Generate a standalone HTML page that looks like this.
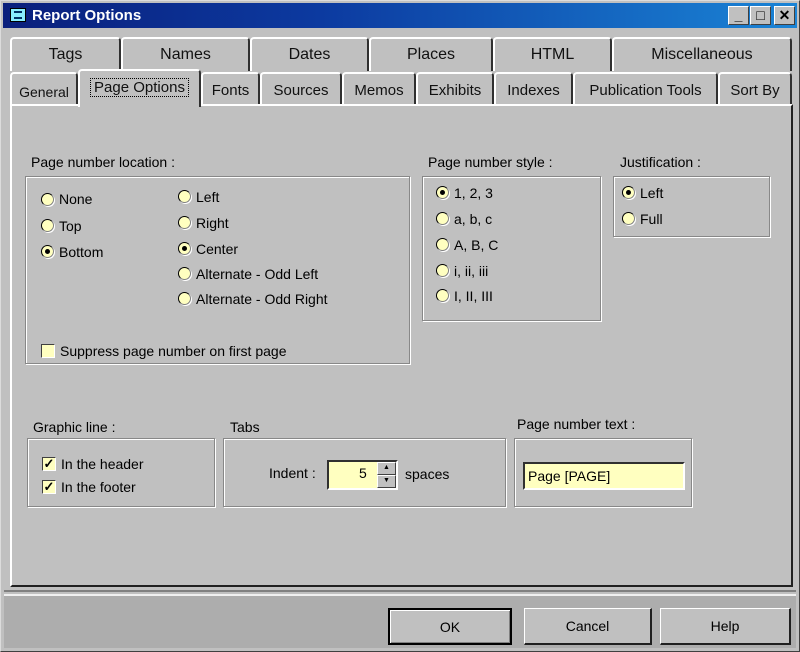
<!DOCTYPE html>
<html><head><meta charset="utf-8"><style>
*{margin:0;padding:0;box-sizing:border-box}
body{width:800px;height:652px;background:#c0c0c0;font-family:"Liberation Sans",sans-serif;font-size:14px;color:#000;position:relative;overflow:hidden}
.a{position:absolute}
.win{left:0;top:0;width:800px;height:652px;border:1px solid #dcdcdc;border-right-color:#404040;border-bottom-color:#404040;background:#c0c0c0}
.title{left:3px;top:3px;width:794px;height:25px;background:linear-gradient(90deg,#0a1f7c 0%,#0c3aa0 40%,#1a84d6 100%);color:#fff;font-weight:bold;font-size:15px;line-height:25px;padding-left:29px}
.tb{top:6px;width:21px;height:19px;background:#c0c0c0;border:1px solid #fff;border-right-color:#404040;border-bottom-color:#404040;font-size:14px;line-height:16px;text-align:center;color:#000;font-weight:bold}
.tab{background:#c0c0c0;border:2px solid #fff;border-right:2px solid #303030;border-bottom:none;border-radius:4px 4px 0 0;text-align:center;font-size:16px;line-height:32px;color:#111}
.tab2{font-size:15px;line-height:34px}
.panel{left:10px;top:104px;width:783px;height:483px;border:2px solid #fff;border-right-color:#202020;border-bottom-color:#202020;background:#c0c0c0}
.box{border:1px solid #888;box-shadow:inset 1px 1px 0 #fff,1px 1px 0 #fff}
.lbl{font-size:14px}
.r{width:13px;height:13px;border-radius:50%;background:#ffffc0;border:1px solid #808080;border-top-color:#000;border-left-color:#000;box-shadow:1px 1px 0 #fff}
.r.on::after{content:"";position:absolute;left:3px;top:3px;width:5px;height:5px;border-radius:50%;background:#000}
.cb{width:14px;height:14px;background:#ffffc0;border:1px solid #fff;border-top-color:#404040;border-left-color:#404040;font-size:13px;line-height:12px;text-align:center;font-weight:bold}
.btn{top:608px;height:37px;border:1px solid #fff;border-right:2px solid #202020;border-bottom:2px solid #202020;text-align:center;line-height:34px;font-size:14px;background:#c0c0c0}
</style></head><body>
<div class="a win"></div>
<div class="a title">Report Options</div>
<div class="a" style="left:10px;top:8px;width:16px;height:14px;background:#8ef;border:1px solid #000"><div style="margin:2px 3px;height:8px;border-top:2px solid #036;border-bottom:2px solid #036"></div></div>
<div class="a tb" style="left:728px">_</div>
<div class="a tb" style="left:750px">□</div>
<div class="a tb" style="left:774px">✕</div>

<div class="a tab" style="left:10px;top:37px;width:111px;height:34px">Tags</div>
<div class="a tab" style="left:121px;top:37px;width:129px;height:34px">Names</div>
<div class="a tab" style="left:250px;top:37px;width:119px;height:34px">Dates</div>
<div class="a tab" style="left:369px;top:37px;width:124px;height:34px">Places</div>
<div class="a tab" style="left:493px;top:37px;width:119px;height:34px">HTML</div>
<div class="a tab" style="left:612px;top:37px;width:180px;height:34px">Miscellaneous</div>

<div class="a tab tab2" style="left:10px;top:72px;width:68px;height:33px;font-size:14px;line-height:36px">General</div>
<div class="a tab tab2" style="left:201px;top:72px;width:59px;height:33px">Fonts</div>
<div class="a tab tab2" style="left:260px;top:72px;width:82px;height:33px">Sources</div>
<div class="a tab tab2" style="left:342px;top:72px;width:74px;height:33px">Memos</div>
<div class="a tab tab2" style="left:416px;top:72px;width:78px;height:33px">Exhibits</div>
<div class="a tab tab2" style="left:494px;top:72px;width:79px;height:33px">Indexes</div>
<div class="a tab tab2" style="left:573px;top:72px;width:145px;height:33px">Publication Tools</div>
<div class="a tab tab2" style="left:718px;top:72px;width:74px;height:33px">Sort By</div>
<div class="a panel"></div>
<div class="a tab" style="left:78px;top:69px;width:123px;height:38px;border-bottom:none;font-size:15px;line-height:33px;z-index:2"><span style="border:1px dotted #000;padding:0 3px">Page Options</span></div>

<div class="a lbl" style="left:31px;top:154px">Page number location :</div>
<div class="a box" style="left:25px;top:176px;width:385px;height:188px"></div>
<div class="a r" style="left:41px;top:193px"></div><div class="a" style="left:59px;top:191px">None</div>
<div class="a r" style="left:41px;top:219px"></div><div class="a" style="left:59px;top:218px">Top</div>
<div class="a r on" style="left:41px;top:245px"></div><div class="a" style="left:59px;top:244px">Bottom</div>
<div class="a r" style="left:178px;top:190px"></div><div class="a" style="left:196px;top:189px">Left</div>
<div class="a r" style="left:178px;top:216px"></div><div class="a" style="left:196px;top:215px">Right</div>
<div class="a r on" style="left:178px;top:242px"></div><div class="a" style="left:196px;top:241px">Center</div>
<div class="a r" style="left:178px;top:267px"></div><div class="a" style="left:196px;top:266px">Alternate - Odd Left</div>
<div class="a r" style="left:178px;top:292px"></div><div class="a" style="left:196px;top:291px">Alternate - Odd Right</div>
<div class="a cb" style="left:41px;top:344px"></div><div class="a" style="left:60px;top:343px">Suppress page number on first page</div>

<div class="a lbl" style="left:428px;top:154px">Page number style :</div>
<div class="a box" style="left:422px;top:176px;width:179px;height:145px"></div>
<div class="a r on" style="left:436px;top:186px"></div><div class="a" style="left:454px;top:185px">1, 2, 3</div>
<div class="a r" style="left:436px;top:212px"></div><div class="a" style="left:454px;top:211px">a, b, c</div>
<div class="a r" style="left:436px;top:238px"></div><div class="a" style="left:454px;top:237px">A, B, C</div>
<div class="a r" style="left:436px;top:264px"></div><div class="a" style="left:454px;top:263px">i, ii, iii</div>
<div class="a r" style="left:436px;top:289px"></div><div class="a" style="left:454px;top:288px">I, II, III</div>

<div class="a lbl" style="left:620px;top:154px">Justification :</div>
<div class="a box" style="left:613px;top:176px;width:157px;height:61px"></div>
<div class="a r on" style="left:622px;top:186px"></div><div class="a" style="left:640px;top:185px">Left</div>
<div class="a r" style="left:622px;top:212px"></div><div class="a" style="left:640px;top:211px">Full</div>

<div class="a lbl" style="left:33px;top:419px">Graphic line :</div>
<div class="a box" style="left:27px;top:438px;width:188px;height:69px"></div>
<div class="a cb" style="left:42px;top:457px">✓</div><div class="a" style="left:61px;top:456px">In the header</div>
<div class="a cb" style="left:42px;top:480px">✓</div><div class="a" style="left:61px;top:479px">In the footer</div>

<div class="a lbl" style="left:230px;top:419px">Tabs</div>
<div class="a box" style="left:223px;top:438px;width:283px;height:69px"></div>
<div class="a" style="left:269px;top:465px">Indent :</div>
<div class="a" style="left:327px;top:460px;width:71px;height:30px;background:#ffffc0;border:2px solid #303030;border-right-color:#fff;border-bottom-color:#fff"></div>
<div class="a" style="left:359px;top:465px">5</div>
<div class="a" style="left:377px;top:462px;width:19px;height:13px;background:#c0c0c0;border:1px solid #fff;border-right-color:#404040;border-bottom-color:#404040;font-size:7px;text-align:center;line-height:10px">▲</div>
<div class="a" style="left:377px;top:475px;width:19px;height:13px;background:#c0c0c0;border:1px solid #fff;border-right-color:#404040;border-bottom-color:#404040;font-size:7px;text-align:center;line-height:10px">▼</div>
<div class="a" style="left:405px;top:466px">spaces</div>

<div class="a lbl" style="left:517px;top:416px">Page number text :</div>
<div class="a box" style="left:514px;top:438px;width:178px;height:69px"></div>
<div class="a" style="left:523px;top:462px;width:162px;height:28px;background:#ffffc0;border:2px solid #303030;border-right-color:#fff;border-bottom-color:#fff;padding:4px 3px">Page [PAGE]</div>

<div class="a" style="left:4px;top:594px;width:792px;height:54px;background:#adadad;border-top:2px solid #f0f0f0"></div>
<div class="a" style="left:4px;top:590px;width:792px;height:2px;background:#808080"></div>
<div class="a btn" style="left:388px;width:124px;border:2px solid #000;background:#c0c0c0;box-shadow:inset 1px 1px 0 #fff,inset -1px -1px 0 #808080">OK</div>
<div class="a btn" style="left:524px;width:128px">Cancel</div>
<div class="a btn" style="left:660px;width:131px">Help</div>
</body></html>
